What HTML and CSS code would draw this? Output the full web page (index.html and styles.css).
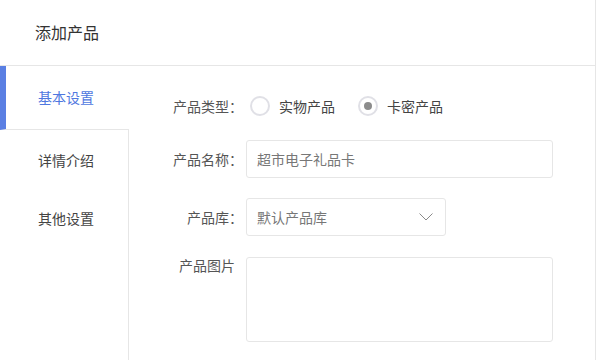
FILE: index.html
```html
<!DOCTYPE html>
<html lang="zh-CN">
<head>
<meta charset="utf-8">
<link rel="stylesheet" href="styles.css">
</head>
<body>
<div class="dialog">
  <div class="header">添加产品</div>
  <div class="body">
    <div class="sidebar">
      <div class="tab active">基本设置</div>
      <div class="tab tab2">详情介绍</div>
      <div class="tab tab3">其他设置</div>
      <div class="filler"></div>
    </div>
    <div class="main">
      <div class="row row-type">
        <div class="label">产品类型：</div>
        <div class="radios">
          <span class="radio"><span class="circle"></span><span class="rtext">实物产品</span></span>
          <span class="radio checked"><span class="circle"><span class="dot"></span></span><span class="rtext">卡密产品</span></span>
        </div>
      </div>
      <div class="row row-name">
        <div class="label">产品名称：</div>
        <div class="input">超市电子礼品卡</div>
      </div>
      <div class="row row-lib">
        <div class="label">产品库：</div>
        <div class="select">
          <span>默认产品库</span>
          <svg class="chev" width="14" height="8" viewBox="0 0 14 8"><path d="M0.5 0.5 L7 7 L13.5 0.5" fill="none" stroke="#8a8a8a" stroke-width="1"/></svg>
        </div>
      </div>
      <div class="row row-img">
        <div class="label label-top">产品图片</div>
        <div class="textarea"></div>
      </div>
    </div>
  </div>
</div>
</body>
</html>
```
FILE: styles.css
```css
* { box-sizing: border-box; }
html, body { margin: 0; padding: 0; background: #fff; }
body {
  font-family: "Noto Sans CJK SC", "Noto Sans", sans-serif;
  font-size: 14px;
  color: #555;
  width: 596px;
  height: 360px;
  overflow: hidden;
}
.dialog {
  width: 596px;
  height: 360px;
  border-right: 1px solid #e6e6e6;
  display: flex;
  flex-direction: column;
}
.header {
  height: 66px;
  border-bottom: 1px solid #e6e6e6;
  padding-left: 35px;
  padding-bottom: 2px;
  display: flex;
  align-items: center;
  font-size: 16px;
  color: #333;
  flex: none;
}
.body {
  flex: 1;
  display: flex;
}
.sidebar {
  width: 129px;
  display: flex;
  flex-direction: column;
  flex: none;
}
.tab {
  display: flex;
  align-items: center;
  padding-left: 38px;
  padding-bottom: 2px;
  color: #444;
  border-right: 1px solid #e6e6e6;
}
.tab.active {
  height: 64px;
  border-right: none;
  border-left: 6px solid #5a7fe3;
  padding-left: 32px;
  border-bottom: 1px solid #e6e6e6;
  color: #4f78df;
}
.tab2 { height: 62px; }
.tab3 { height: 54px; }
.filler { flex: 1; border-right: 1px solid #e6e6e6; }
.main {
  flex: 1;
  padding-top: 21px;
  padding-left: 14px;
}
.row { display: flex; align-items: center; }
.label {
  width: 100px;
  text-align: right;
  color: #555;
  margin-right: 3px;
  flex: none;
}
.row-type { height: 38px; }
.radios { display: flex; align-items: center; margin-left: 4px; }
.radio { display: flex; align-items: center; margin-right: 23px; color: #444; }
.circle {
  width: 20px;
  height: 20px;
  border-radius: 50%;
  border: 2px solid #e0e0e6;
  display: flex;
  align-items: center;
  justify-content: center;
  margin-right: 9px;
}
.dot { width: 8px; height: 8px; border-radius: 50%; background: #8c8c8c; }
.row-name { margin-top: 15px; }
.input, .select, .textarea {
  border: 1px solid #e6e6e6;
  border-radius: 3px;
  color: #777;
}
.input {
  width: 307px;
  height: 38px;
  display: flex;
  align-items: center;
  padding-left: 10px;
}
.row-lib { margin-top: 20px; }
.select {
  width: 200px;
  height: 38px;
  display: flex;
  align-items: center;
  justify-content: space-between;
  padding-left: 10px;
  padding-right: 12px;
}
.chev { display: block; }
.row-img { margin-top: 21px; align-items: flex-start; }
.label-top { padding-right: 8px; margin-top: -2px; line-height: 20px; }
.textarea { width: 307px; height: 85px; }
```
